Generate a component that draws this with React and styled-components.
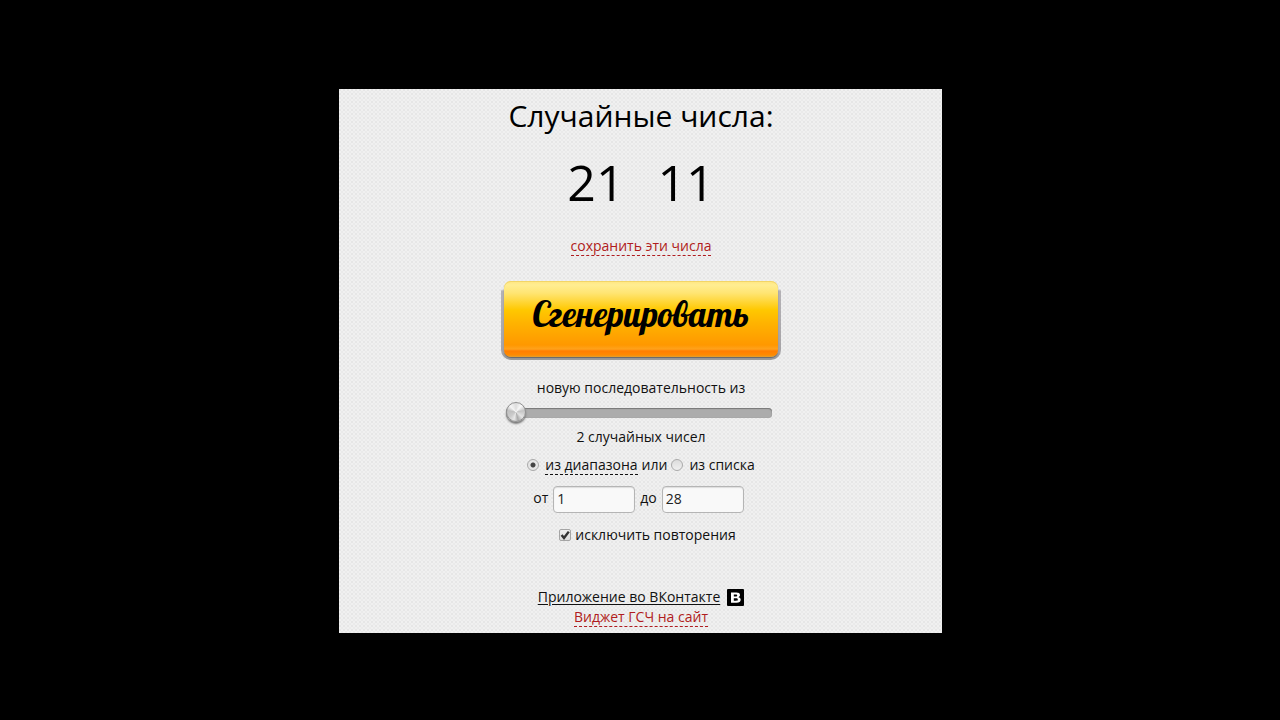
import { useState } from 'react'
import styled, { createGlobalStyle } from 'styled-components'

const GlobalStyle = createGlobalStyle`
	* {
		box-sizing: border-box;
	}

	body {
		margin: 0;
		background: #000;
		color: #111;
		font-family: 'Open Sans', 'Noto Sans', sans-serif;
		font-size: 14px;
		line-height: 20px;
	}
`

const Page = styled.main`
	display: flex;
	justify-content: center;
	align-items: flex-start;
	min-height: 100vh;
	padding: 89px 16px 16px;
`

const Panel = styled.form`
	display: flex;
	flex-direction: column;
	align-items: center;
	width: 100%;
	max-width: 603px;
	padding: 7px 15px 6px 17px;
	background-color: #f0f0f0;
	background-image:
		radial-gradient(circle at 1px 1px, #e6e6e6 1px, transparent 1px),
		radial-gradient(circle at 3px 3px, #eaeaea 1px, transparent 1px);
	background-size: 4px 4px;
`

const Title = styled.h1`
	margin: 0;
	color: #000;
	font-size: 30px;
	font-weight: 400;
	line-height: 40px;
`

const Numbers = styled.output`
	display: flex;
	gap: 33px;
	margin-top: 16px;
	color: #000;
	font-size: 50px;
	line-height: 60px;
`

const TextLink = styled.a`
	height: ${({ $dashed }) => ($dashed ? '20px' : 'auto')};
	color: ${({ $red }) => ($red ? '#b01c20' : '#111')};
	text-decoration: ${({ $dashed }) => ($dashed ? 'none' : 'underline')};
	text-underline-offset: 2px;
	border-bottom: ${({ $dashed }) => ($dashed ? '1px dashed' : 'none')};
`

const SaveRow = styled.div`
	display: flex;
	margin-top: 24px;
`

const GenerateBase = styled.div`
	display: flex;
	width: 280px;
	margin-top: 25px;
	padding: 0 3px 3px;
	background: linear-gradient(transparent 8px, #b4b2b6 10px, #a5a3a6 72px, #999);
	border-radius: 10px;
`

const GenerateButton = styled.button`
	width: 100%;
	height: 76px;
	padding: 0 0 11px;
	border: 0;
	border-radius: 7px;
	background: linear-gradient(
		#ffe680 0,
		#ffed92 4px,
		#ffe573 12px,
		#ffc800 29px,
		#ffb300 42px,
		#ff9800 64px,
		#ffa21c 68px,
		#ff7e00 70px,
		#ff8a00 74px,
		#e0a030 76px
	);
	box-shadow: inset 0 1px #f2d568, 0 1px 1px #666;
	color: #000;
	font-family: Lobster, 'Liberation Serif', serif;
	font-size: 35px;
	font-weight: 400;
	cursor: pointer;
`

const CountLabel = styled.label`
	margin-top: 18px;
`

const CountSlider = styled.input`
	appearance: none;
	width: 266px;
	height: 22px;
	margin: 4px 5px 3px 0;
	background: transparent;

	&::-webkit-slider-runnable-track {
		height: 10px;
		background: #acacac;
		border-radius: 4px;
		box-shadow: inset 0 1px 1px #777, inset 0 0 1px #888;
	}

	&::-webkit-slider-thumb {
		appearance: none;
		width: 20px;
		height: 20px;
		margin-top: -6px;
		border: 1px solid #909090;
		border-radius: 50%;
		background: conic-gradient(
			#ddd,
			#f8f8f8 40deg,
			#c4c4c4 80deg,
			#e4e4e4 130deg,
			#aaa 165deg,
			#e8e8e8 195deg,
			#ccc 230deg,
			#c0c0c0 280deg,
			#f4f4f4 315deg,
			#ddd
		);
		box-shadow: 0 2px 2px #777;
	}
`

const SourceRow = styled.div`
	display: flex;
	align-items: center;
	gap: 4px;
	margin-top: 8px;
`

const SourceLabel = styled.label`
	height: 20px;
	margin-left: 2px;
	border-bottom: ${({ $active }) => ($active ? '1px dashed #111' : 'none')};
`

const Radio = styled.input`
	appearance: none;
	width: 12px;
	height: 12px;
	margin: 0;
	border: 1px solid #aaa;
	border-radius: 50%;
	background: linear-gradient(#dcdcdc, #f0f0f0);

	&:checked {
		background: radial-gradient(circle, #444 2px, #e6e6e6 3px);
	}
`

const RangeRow = styled.div`
	display: flex;
	align-items: center;
	gap: 5px;
	margin: 11px 5px 0 0;
`

const RangeLabel = styled.label`
	padding-bottom: 3px;
`

const NumberInput = styled.input`
	width: 82px;
	height: 27px;
	padding: 0 3px 2px;
	border: 1px solid #b5b5b5;
	border-radius: 4px;
	background: #f9f9f9;
	box-shadow: inset 0 1px 1px #ddd;
	color: #222;
	font: inherit;
`

const UniqueLabel = styled.label`
	display: flex;
	align-items: center;
	gap: 4px;
	margin: 12px 0 0 13px;
`

const Checkbox = styled.input`
	appearance: none;
	width: 12px;
	height: 12px;
	margin: 0;
	border: 1px solid #a5a5a5;
	border-radius: 2px;
	background: linear-gradient(#eee, #ddd);
`

const CheckWrap = styled.span`
	display: grid;

	> * {
		grid-area: 1 / 1;
	}

	svg {
		pointer-events: none;
	}
`

const Footer = styled.footer`
	display: flex;
	flex-direction: column;
	align-items: center;
	margin-top: 42px;
`

const AppRow = styled.div`
	display: flex;
	align-items: center;
	gap: 7px;
`

const CheckMark = () => (
	<svg width="12" height="12" viewBox="0 0 12 12" aria-hidden="true">
		<path d="M2.6 6l2.4 3L9.8 2.6" fill="none" stroke="#333" strokeWidth="2.4" />
	</svg>
)

const VkLogo = () => (
	<svg width="17" height="17" viewBox="0 0 17 17" aria-hidden="true">
		<rect width="17" height="17" rx="1" fill="#000" />
		<path
			fill="#fff"
			fillRule="evenodd"
			d="M4 3.500h5.300c2.500 0 3.700.8 3.700 2.500 0 1.100-.6 1.800-1.600 2.200 1.500.3 2.300 1.200 2.300 2.500 0 2-1.500 3-4.100 3H4zM6.800 5.400v2h2c1 0 1.400-.3 1.400-1s-.4-1-1.400-1zM6.800 9.300v2.400h2.300c1.200 0 1.700-.4 1.700-1.200 0-.9-.5-1.200-1.700-1.200z"
		/>
	</svg>
)

const randomNumbers = (count, from, to, unique) => {
	const result = []
	const size = to - from + 1
	if (size < 1 || (unique && size < count)) return result
	while (result.length < count) {
		const value = from + Math.floor(Math.random() * size)
		if (!unique || !result.includes(value)) result.push(value)
	}
	return result
}

const App = () => {
	const [numbers, setNumbers] = useState([21, 11])
	const [count, setCount] = useState(2)
	const [source, setSource] = useState('range')
	const [from, setFrom] = useState('1')
	const [to, setTo] = useState('28')
	const [unique, setUnique] = useState(true)

	const handleSubmit = (e) => {
		e.preventDefault()
		setNumbers(randomNumbers(count, Number(from), Number(to), unique))
	}

	return (
		<>
			<GlobalStyle />
			<Page>
				<Panel onSubmit={handleSubmit}>
					<Title>Случайные числа:</Title>
					<Numbers>
						{numbers.map((number, index) => (
							<span key={index}>{number}</span>
						))}
					</Numbers>
					<SaveRow>
						<TextLink href="#save" $red $dashed>
							сохранить эти числа
						</TextLink>
					</SaveRow>
					<GenerateBase>
						<GenerateButton type="submit">Сгенерировать</GenerateButton>
					</GenerateBase>
					<CountLabel htmlFor="count">новую последовательность из</CountLabel>
					<CountSlider
						id="count"
						type="range"
						min="2"
						max="20"
						value={count}
						onChange={(e) => setCount(Number(e.target.value))}
					/>
					<div>{count} случайных чисел</div>
					<SourceRow>
						<Radio
							id="source-range"
							type="radio"
							name="source"
							checked={source === 'range'}
							onChange={() => setSource('range')}
						/>
						<SourceLabel htmlFor="source-range" $active={source === 'range'}>
							из диапазона
						</SourceLabel>
						<span>или</span>
						<Radio
							id="source-list"
							type="radio"
							name="source"
							checked={source === 'list'}
							onChange={() => setSource('list')}
						/>
						<SourceLabel htmlFor="source-list" $active={source === 'list'}>
							из списка
						</SourceLabel>
					</SourceRow>
					<RangeRow>
						<RangeLabel htmlFor="from">от</RangeLabel>
						<NumberInput id="from" value={from} onChange={(e) => setFrom(e.target.value)} />
						<RangeLabel htmlFor="to">до</RangeLabel>
						<NumberInput id="to" value={to} onChange={(e) => setTo(e.target.value)} />
					</RangeRow>
					<UniqueLabel>
						<CheckWrap>
							<Checkbox
								type="checkbox"
								checked={unique}
								onChange={(e) => setUnique(e.target.checked)}
							/>
							{unique && <CheckMark />}
						</CheckWrap>
						исключить повторения
					</UniqueLabel>
					<Footer>
						<AppRow>
							<TextLink href="#vk">Приложение во ВКонтакте</TextLink>
							<VkLogo />
						</AppRow>
						<TextLink href="#widget" $red $dashed>
							Виджет ГСЧ на сайт
						</TextLink>
					</Footer>
				</Panel>
			</Page>
		</>
	)
}

export default App
